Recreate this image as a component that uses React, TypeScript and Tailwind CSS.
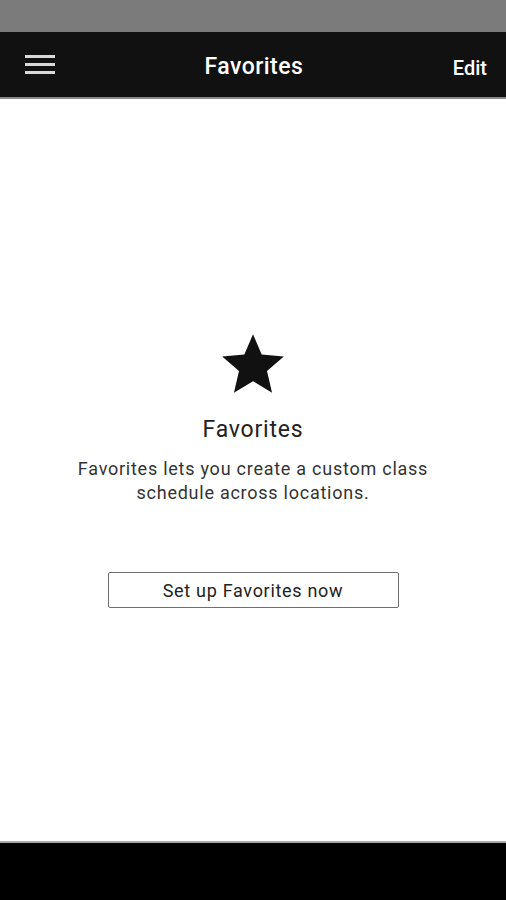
import React from "react";

export default function App() {
  return (
    <div className="w-[506px] h-[900px] flex flex-col bg-white overflow-hidden" style={{ fontFamily: "Roboto, 'Noto Sans', sans-serif" }}>
      <div className="h-[32px] bg-[#7b7b7b] shrink-0" />
      <header className="h-[67px] bg-[#111111] shrink-0 flex items-center justify-between pl-[25px] pr-[19px] pt-[6px] border-b-[2px] border-[#8a8a8a]">
        <div className="w-[30px] flex flex-col gap-[5px] -mt-[7px]">
          <div className="h-[3px] bg-[#d9d9d9]" />
          <div className="h-[3px] bg-[#d9d9d9]" />
          <div className="h-[3px] bg-[#d9d9d9]" />
        </div>
        <div className="text-white text-[23px] font-medium tracking-[0.45px]">Favorites</div>
        <div className="text-white text-[20px] font-medium">Edit</div>
      </header>
      <main className="flex-1 flex flex-col items-center pt-[229px]">
        <svg width="74" height="74" viewBox="0 0 24 24" className="block">
          <path fill="#111" d="M12 17.27L18.18 21l-1.64-7.03L22 9.24l-7.19-.61L12 2 9.19 8.63 2 9.24l5.46 4.73L5.82 21z" />
        </svg>
        <div className="mt-[14px] text-[23px] leading-[28px] text-[#222] tracking-[0.8px]">Favorites</div>
        <div className="mt-[13px] text-[18px] leading-[24px] text-[#333] text-center tracking-[0.75px]">
          Favorites lets you create a custom class<br />schedule across locations.
        </div>
        <button className="mt-[67px] w-[291px] h-[36px] border border-[#6f6f6f] rounded-[2px] text-[18px] text-[#222] tracking-[0.7px] flex items-center justify-center">
          Set up Favorites now
        </button>
      </main>
      <div className="h-[59px] bg-black border-t-[2px] border-[#aaaaaa] shrink-0" />
    </div>
  );
}
